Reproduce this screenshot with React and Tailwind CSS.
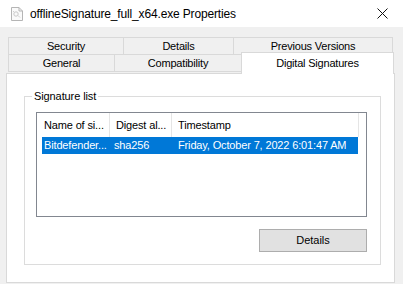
import React from 'react';

const font = { fontFamily: '"Liberation Sans", Arial, sans-serif' };

const FileIcon = () => (
  <svg width="12" height="14" viewBox="0 0 12 14" className="shrink-0">
    <path d="M0.5 0.5H8L11.5 4V13.5H0.5Z" fill="#fafafa" stroke="#b5b5b5" />
    <path d="M8 0.5V4H11.5" fill="none" stroke="#b5b5b5" />
    <circle cx="5" cy="7" r="2.2" fill="none" stroke="#c8c8c8" />
    <path d="M7 8.5L9 10.5M3 5L2 4" stroke="#cfcfcf" />
  </svg>
);

const CloseIcon = () => (
  <svg width="11" height="11" viewBox="0 0 11 11">
    <path d="M0.5 0.5L10.5 10.5M10.5 0.5L0.5 10.5" stroke="#111" strokeWidth="1" />
  </svg>
);

const Tab = ({ label, width }) => (
  <div
    className="h-[18px] flex items-center justify-center border border-[#d9d9d9] -ml-px first:ml-0 bg-[#f0f0f0] text-[11px] tracking-[-0.2px] text-black"
    style={{ width }}
  >
    {label}
  </div>
);

const columns = [
  { label: 'Name of si...', width: 72 },
  { label: 'Digest al...', width: 62 },
  { label: 'Timestamp', width: 187 },
];

export default function App() {
  return (
    <div className="w-[403px] h-[284px] bg-[#f0f0f0] flex flex-col overflow-hidden" style={font}>
      {/* title bar */}
      <div className="h-[27px] bg-white flex items-center pl-[11px] pr-[15px] shrink-0">
        <FileIcon />
        <span className="ml-[7px] text-[12px] text-black tracking-[-0.15px]">
          offlineSignature_full_x64.exe Properties
        </span>
        <div className="ml-auto flex items-center">
          <CloseIcon />
        </div>
      </div>

      {/* tabs */}
      <div className="mt-[10px] ml-[8px] flex flex-col">
        <div className="flex">
          <Tab label="Security" width={116} />
          <Tab label="Details" width={111} />
          <Tab label="Previous Versions" width={160} />
        </div>
        <div className="flex -mt-px">
          <Tab label="General" width={107} />
          <Tab label="Compatibility" width={128} />
          <div className="relative z-10 -ml-px -mt-[2px] w-[153px] h-[22px] bg-white border border-b-0 border-[#d9d9d9] flex justify-center pt-[2px] text-[11px] tracking-[-0.2px] text-black">
            Digital Signatures
          </div>
        </div>
      </div>

      {/* panel */}
      <div className="ml-[6px] -mt-px w-[389px] h-[210px] bg-white border border-[#d9d9d9] pt-[22px] pl-[17px]">
        <div className="relative w-[357px] h-[169px] border border-[#dcdcdc] pt-[15px] pl-[11px]">
          <span className="absolute left-[7px] -top-[8px] bg-white px-[2px] text-[11px] tracking-[-0.1px] text-black leading-[14px]">
            Signature list
          </span>

          {/* list view */}
          <div className="w-[331px] h-[105px] border border-[#828790] bg-white text-[11px] tracking-[-0.15px]">
            <div className="flex h-[24px] pl-[1px]">
              {columns.map((c) => (
                <div
                  key={c.label}
                  className="h-full flex items-center pl-[6px] border-r border-[#e5e5e5] text-black"
                  style={{ width: c.width }}
                >
                  {c.label}
                </div>
              ))}
            </div>
            <div className="flex h-[17px] ml-[5px] w-[316px] bg-[#0078d7] text-white items-center">
              <div className="w-[68px] pl-[2px]">Bitdefender...</div>
              <div className="w-[63px] pl-[4px]">sha256</div>
              <div className="pl-[5px]">Friday, October 7, 2022 6:01:47 AM</div>
            </div>
          </div>

          <div className="flex justify-end pr-[13px] mt-[12px]">
            <button className="w-[108px] h-[23px] bg-[#e1e1e1] border border-[#adadad] text-[11px] text-black flex items-center justify-center">
              Details
            </button>
          </div>
        </div>
      </div>
    </div>
  );
}
